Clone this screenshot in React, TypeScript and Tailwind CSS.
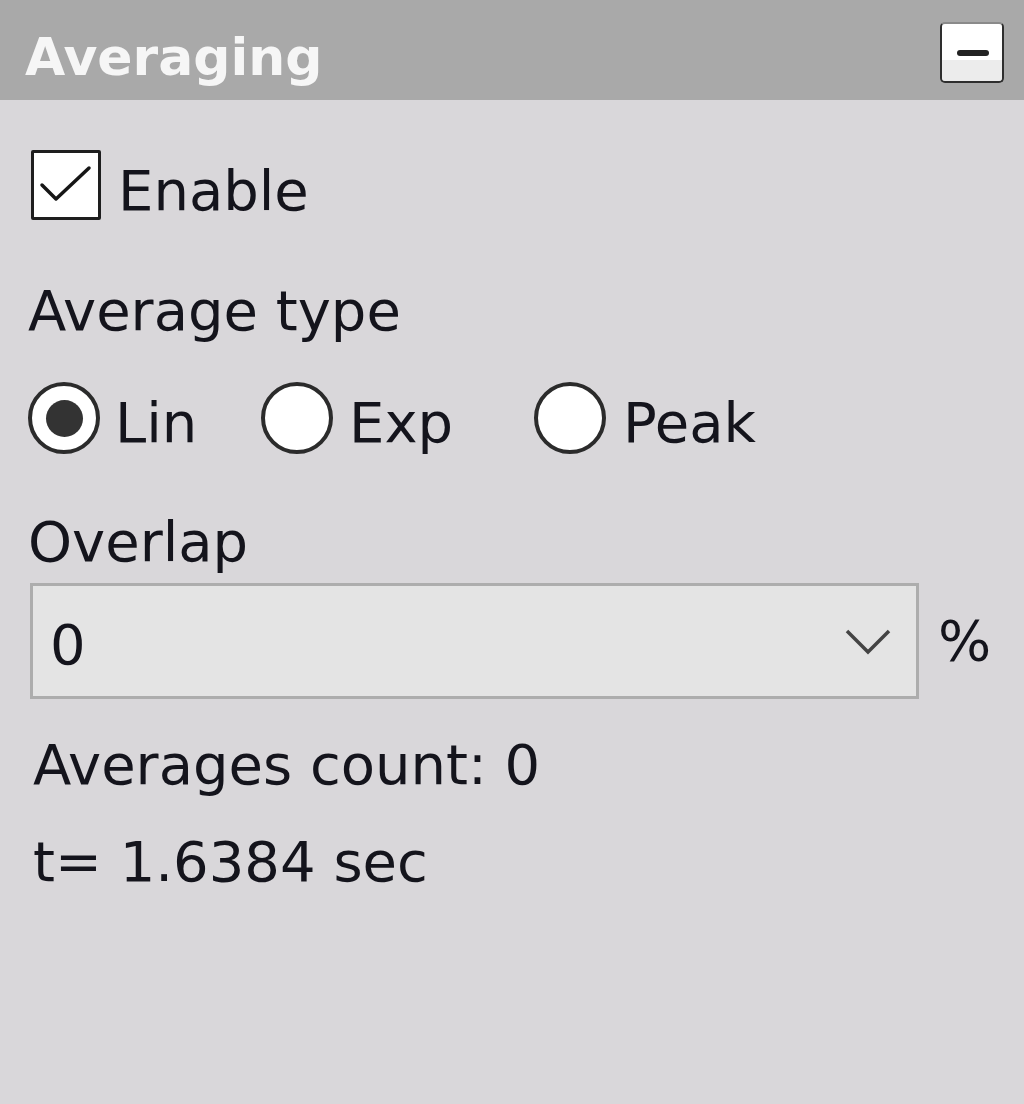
import React from "react";

const font = { fontFamily: '"DejaVu Sans", Verdana, sans-serif' };

function Radio({ checked }: { checked?: boolean }) {
	return (
		<div className="flex h-[72px] w-[72px] shrink-0 items-center justify-center rounded-full border-[4px] border-[#2b2b2b] bg-white">
			{checked && <div className="h-[37px] w-[37px] rounded-full bg-[#333333]" />}
		</div>
	);
}

export default function App() {
	return (
		<div
			className="flex h-[1104px] w-[1024px] flex-col bg-[#d9d7da] text-[56px] leading-[56px] text-[#14141c]"
			style={font}
		>
			{/* title bar */}
			<div className="flex h-[100px] shrink-0 items-start justify-between bg-[#a9a9a9]">
				<div className="ml-[25px] mt-[31px] text-[52px] font-bold leading-[52px] text-[#f6f6f6]">
					Averaging
				</div>
				<div className="mr-[20px] mt-[22px] flex h-[61px] w-[64px] flex-col overflow-hidden rounded-[5px] border-[2px] border-[#2e2e2e] border-t-[#8a8a8a]">
					<div className="h-[36px] bg-white pl-[15px] pt-[26px]">
						<div className="h-[6px] w-[32px] rounded-full bg-[#222222]" />
					</div>
					<div className="flex-1 bg-[#ececec]" />
				</div>
			</div>

			<div className="flex flex-col pl-[28px]">
				{/* enable */}
				<div className="mt-[50px] flex items-start">
					<div className="ml-[3px] h-[70px] w-[70px] shrink-0 rounded-[2px] border-[3px] border-[#1e1e1e] bg-white">
						<svg width="64" height="64" viewBox="0 0 64 64">
							<path
								d="M8 32 L22 46 L55 15"
								fill="none"
								stroke="#161616"
								strokeWidth="3.5"
								strokeLinejoin="round"
								strokeLinecap="round"
							/>
						</svg>
					</div>
					<span className="ml-[17px] mt-[13px]">Enable</span>
				</div>

				<div className="mt-[63px]">Average type</div>

				{/* radios */}
				<div className="mt-[43px] flex items-start">
					<div className="flex w-[233px] items-start">
						<Radio checked />
						<span className="ml-[15px] mt-[13px]">Lin</span>
					</div>
					<div className="flex w-[273px] items-start">
						<Radio />
						<span className="ml-[16px] mt-[13px]">Exp</span>
					</div>
					<div className="flex items-start">
						<Radio />
						<span className="ml-[17px] mt-[13px]">Peak</span>
					</div>
				</div>

				<div className="mt-[60px]">Overlap</div>

				{/* overlap dropdown */}
				<div className="mt-[13px] flex items-center">
					<div className="ml-[2px] flex h-[116px] w-[889px] items-center justify-between border-[3px] border-[#adadad] bg-[#e4e4e4] pl-[17px] pr-[25px]">
						<span className="mt-[8px]">0</span>
						<svg width="46" height="26" viewBox="0 0 46 26" className="mt-[2px]">
							<path
								d="M2 2 L23 23 L44 2"
								fill="none"
								stroke="#444444"
								strokeWidth="3.5"
							/>
						</svg>
					</div>
					<span className="ml-[19px]">%</span>
				</div>

				<div className="ml-[5px] mt-[38px]">Averages count: 0</div>
				<div className="ml-[5px] mt-[41px]">t= 1.6384 sec</div>
			</div>
		</div>
	);
}
